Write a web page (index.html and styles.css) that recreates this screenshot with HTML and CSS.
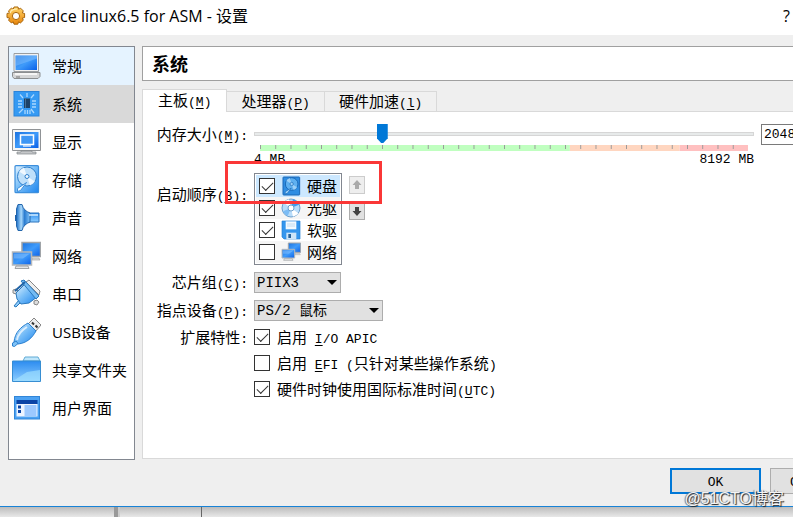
FILE: index.html
```html
<!DOCTYPE html>
<html lang="zh-CN">
<head>
<meta charset="utf-8">
<title>oralce linux6.5 for ASM - 设置</title>
<link rel="stylesheet" href="styles.css">
</head>
<body>
<svg class="defs" aria-hidden="true">
  <defs>
    <linearGradient id="blue" x1="0" y1="0" x2="1" y2="1"><stop offset="0" stop-color="#1c73e0"/><stop offset=".5" stop-color="#3f9bfa"/><stop offset="1" stop-color="#0a60e8"/></linearGradient>
    <linearGradient id="sky" x1="0" y1="0" x2="0" y2="1"><stop offset="0" stop-color="#2c8cf0"/><stop offset="1" stop-color="#8ccdff"/></linearGradient>
    <linearGradient id="pale" x1="0" y1="0" x2="1" y2="1"><stop offset="0" stop-color="#e4f4ff"/><stop offset=".45" stop-color="#7cc0f8"/><stop offset="1" stop-color="#1d85ee"/></linearGradient>
    <linearGradient id="cone" x1="0" y1="0" x2="1" y2="0"><stop offset="0" stop-color="#1c6fc8"/><stop offset=".35" stop-color="#a7d8fb"/><stop offset=".6" stop-color="#2a7cd0"/><stop offset="1" stop-color="#7fc2f8"/></linearGradient>
    <linearGradient id="gold" x1="0" y1="0" x2="0" y2="1"><stop offset="0" stop-color="#ffd468"/><stop offset="1" stop-color="#e8860c"/></linearGradient>
    <symbol id="i-net" viewBox="0 0 30 30">
      <path d="M11 1.500h18.500v14H11z" fill="url(#blue)" stroke="#a0a4a8" stroke-width="1.500"/>
      <path d="M21 17h7l1 2h-8z" fill="#d8dadc" stroke="#999" stroke-width=".6"/>
      <path d="M1.500 11h19v13h-19z" fill="url(#blue)" stroke="#b4b8bc" stroke-width="1.500"/>
      <path d="M3 12.500h16l-7 5H3z" fill="#8cc5ff" opacity=".5"/>
      <path d="M5 25h12l1 2.500H4z" fill="#e3e5e7" stroke="#8d9195" stroke-width=".8"/>
    </symbol>
    <symbol id="i-disk" viewBox="0 0 30 30">
      <rect x="4" y=".7" width="23.500" height="27" rx="1" fill="url(#pale)" stroke="#3d8fdc" stroke-width="1.200"/>
      <circle cx="16" cy="11.500" r="9.500" fill="#bfe0fa" stroke="#2f7fcc"/>
      <path d="M16 11.500 8 6.500a9.500 9.500 0 0 1 5-4zM16 11.500l8 5a9.500 9.500 0 0 1-5 4z" fill="#fff" opacity=".75"/>
      <circle cx="16" cy="11.500" r="2" fill="#eef8ff" stroke="#2f7fcc"/>
      <path d="M15.500 17.500 9.500 25.500 6.500 26.500 6.500 23.500z" fill="#f4fbff" stroke="#3d8fdc"/>
    </symbol>
    <symbol id="i-disk-selected" viewBox="0 0 30 30">
      <rect x="3" y="1.500" width="25" height="27" rx="1" fill="#2f8de2" stroke="#1a69b8" stroke-width="1.500"/>
      <circle cx="16" cy="12" r="9.500" fill="#5fb0f0" stroke="#1a69b8" stroke-width="1.500"/>
      <path d="M16 12 8 7a9.500 9.500 0 0 1 5-4zM16 12l8 5a9.500 9.500 0 0 1-5 4z" fill="#9dd0f7"/>
      <circle cx="16" cy="12" r="2.500" fill="#9dd0f7" stroke="#1a69b8"/>
      <path d="M15.500 18 9.500 26 6 27 6.500 23.500z" fill="#a9d8fa" stroke="#1a69b8"/>
    </symbol>
  </defs>
</svg>

<div class="dialog">
  <header class="titlebar">
    <svg class="app-icon" viewBox="0 0 20 20" aria-hidden="true">
      <path d="M8 1h4l.6 2.200 2-1 2.700 2.700-1 2 2.300.6v4l-2.300.7 1 2-2.800 2.700-2-1-.7 2.300H8l-.7-2.300-2 1-2.700-2.700 1-2L1 11.500v-4l2.500-.6-1-2L5.300 2.200l2 1z" fill="url(#gold)" stroke="#a9660d"/>
      <path d="M4 7c1-3 4-4 7-4" fill="none" stroke="#fff0b8" stroke-width="1.200"/>
      <circle cx="10" cy="10" r="3.600" fill="#fff" stroke="#a9660d"/>
    </svg>
    <span class="title">oralce linux6.5 for ASM - 设置</span>
    <button class="help" aria-label="帮助">?</button>
  </header>

  <div class="body">
    <nav class="sidebar">
      <a href="#general" class="hover"><svg viewBox="0 0 30 30"><path d="M3 2.500h24.500v18H3z" fill="#f2f2f2" stroke="#9a9da0"/><path d="M4.500 4.500h21.500v14.500H4.500z" fill="url(#blue)"/><path d="M4.500 4.500h21.500v3L4.500 15z" fill="#8cc5ff" opacity=".45"/><path d="M1.500 21.500h27.500v4l-2 2H3l-1.500-2z" fill="#d5d6d7" stroke="#8b8e90"/><path d="M4 23h22" stroke="#fff" stroke-width="1.500"/><path d="M5 26h4" stroke="#777"/></svg>常规</a>
      <a href="#system" class="current"><svg viewBox="0 0 30 30"><rect x="3" y="2.500" width="25" height="24.500" fill="#359af3" stroke="#2a83da"/><path d="M13 9.500h6V19h-6z" fill="#1c4266"/><path d="M14.500 9v10" stroke="#456f93"/><path d="M16 4v4M9 5.500l3 3.500M23 5.500 20 9M7 12h4M7 15h4M7 18h4M21 12h4M21 15h4M21 18h4M12 20l-4 4M20 20l3 4M14 21v4M16.500 21v4M19 21v4" stroke="#a9d7ff" stroke-width="1.300"/></svg>系统</a>
      <a href="#display"><svg viewBox="0 0 30 30"><path d="M1.500 2.500h28v21h-28z" fill="#f5f5f5" stroke="#909396"/><path d="M4 5h23.500v16H4z" fill="url(#blue)"/><path d="M9.500 8h13v9.500h-13z" fill="#3e96f4" stroke="#fff" stroke-width="1.500"/><path d="M12 19h8" stroke="#fff" stroke-width="1.200"/><path d="M10 24h11v1h4v2H6v-2h4z" fill="#c5c7c9" stroke="#83878a" stroke-width=".7"/></svg>显示</a>
      <a href="#storage"><svg><use href="#i-disk"/></svg>存储</a>
      <a href="#audio"><svg viewBox="0 0 30 30"><path d="M4 12h3v6H4z" fill="#1f62ad"/><path d="M17 10h11v9H17z" fill="url(#sky)" stroke="#2a73bd"/><path d="M7 1.500h4c1 4.500 4 7 8 8.500v9c-4 1.500-7 4-8 8.500H7L5.500 23V6z" fill="url(#cone)" stroke="#2366ac"/><path d="M18 12h9" stroke="#d3ecff" stroke-width="1.500"/></svg>声音</a>
      <a href="#network"><svg><use href="#i-net"/></svg>网络</a>
      <a href="#serial"><svg viewBox="0 0 30 30"><path d="M15 3l3-2 11 11-1 4z" fill="#eee" stroke="#888"/><path d="M2 11l3-1 2 2-2 3-3-1zM23 22l3-1 2 2-2 3-3-1z" fill="#ddd" stroke="#888"/><path d="M3 27l5-6 2 2-5 5z" fill="#8bcafa" stroke="#2977bb"/><path d="M5 14 14 5l12 13-8 6-8 1-4-5z" fill="url(#pale)" stroke="#2a78bd"/><path d="M10 2l3-1 15 16-3 3z" fill="#74bbf3" stroke="#2a78bd"/><path d="M4 12 14 3" stroke="#1f62a5" stroke-width="2"/></svg>串口</a>
      <a href="#usb"><svg viewBox="0 0 30 30"><path d="M17 7l6-6 7 7-6 7z" fill="#eee" stroke="#858585"/><path d="M21 5.500l2 2M24.500 8.500l2 2" stroke="#333" stroke-width="2"/><path d="M3 25C4 15 10 10 17 6l8 8c-4 7-9 12-18 13z" fill="url(#pale)" stroke="#2a80cf"/><path d="M6 23c1-6 5-10 10-13" fill="none" stroke="#fff" stroke-width="2" opacity=".7"/><path d="M1.500 26 5 24l2 2.500-3.500 3-2-.5z" fill="#7fc2f6" stroke="#2a80cf"/></svg>USB设备</a>
      <a href="#shared"><svg viewBox="0 0 30 30"><path d="M12 6l2-4h13l2 4z" fill="#bfe6fb" stroke="#62abd5"/><path d="M1.500 6h28v20.500h-28z" fill="url(#sky)" stroke="#378ed2"/><path d="M2 26 16 17l13-2v11z" fill="#a5e5ff" opacity=".6"/></svg>共享文件夹</a>
      <a href="#ui"><svg viewBox="0 0 30 30"><rect x="3.500" y="3.500" width="25" height="22.500" fill="#4ca2f3" stroke="#3186d8"/><path d="M5.500 7h21v4h-21z" fill="#0b44a6"/><path d="M5.500 11h21v12.500h-21z" fill="#eef5ff"/><path d="M13.500 12h12v11h-12z" fill="#9dc9ff"/><path d="M7 12.500h3v3H7zM7 17h3v3H7z" fill="#0b44a6"/></svg>用户界面</a>
    </nav>

    <main class="main">
      <h1>系统</h1>
      <div class="tabs" role="tablist">
        <button role="tab" aria-selected="true" class="active">主板<span class="mono">(<u>M</u>)</span></button>
        <button role="tab" aria-selected="false">处理器<span class="mono">(<u>P</u>)</span></button>
        <button role="tab" aria-selected="false">硬件加速<span class="mono">(<u>l</u>)</span></button>
      </div>
      <form class="panel">
        <label for="memory">内存大小<span class="mono">(<u>M</u>):</span></label>
        <div class="memory">
          <div class="slider">
            <input type="range" id="memory" min="0" max="8192" value="2048">
            <svg class="scale" aria-hidden="true">
              <defs><pattern id="ticks" width="3.125%" height="6" patternUnits="userSpaceOnUse"><path d="M.5 0v4" stroke="#999" shape-rendering="crispEdges"/></pattern></defs>
              <rect width="63.500%" height="6" fill="#c0ffc0"/>
              <rect x="63.500%" width="22.500%" height="6" fill="#ffd6c0"/>
              <rect x="86%" width="14%" height="6" fill="#ffc0c0"/>
              <rect width="100%" height="6" fill="url(#ticks)"/>
            </svg>
            <div class="range-labels mono"><span>4 MB</span><span>8192 MB</span></div>
          </div>
          <input type="text" class="amount mono" aria-label="内存 MB" value="2048 MB">
        </div>

        <span class="boot-label">启动顺序<span class="mono">(<u>B</u>):</span></span>
        <div class="boot">
          <ul>
            <li class="selected"><label><input type="checkbox" checked><svg><use href="#i-disk-selected"/></svg>硬盘</label></li>
            <li class="alt"><label><input type="checkbox" checked><svg viewBox="0 0 30 30"><circle cx="15" cy="15" r="13.500" fill="#b8dcfa" stroke="#6c9fcc" stroke-width="1.500"/><path d="M15 15 4 7a13 13 0 0 1 8-5zM15 15l11 8a13 13 0 0 1-8 5z" fill="#fff"/><path d="M15 15 18 2a13 13 0 0 1 9 8z" fill="#3d9cf2"/><path d="M15 15 3 20a13 13 0 0 0 7 7z" fill="#7bbcf5"/><circle cx="15" cy="15" r="4.500" fill="#fff" stroke="#6c9fcc" stroke-width="1.500"/></svg>光驱</label></li>
            <li><label><input type="checkbox" checked><svg viewBox="0 0 30 30"><path d="M1.500 1.500h27v27h-24l-3-3z" fill="#3496ee" stroke="#2380d3"/><path d="M7 2h16v12H7z" fill="#f3faff"/><path d="M8 19h15v10H8z" fill="#cde5f8"/><path d="M11 21h4v6h-4z" fill="#27639b"/><path d="M9 6h12M9 9h12" stroke="#a9cde9"/></svg>软驱</label></li>
            <li class="alt"><label><input type="checkbox"><svg><use href="#i-net"/></svg>网络</label></li>
          </ul>
          <div class="movers">
            <button type="button" disabled aria-label="上移"><svg viewBox="0 0 10 10"><path d="M5 0l4.500 5H7v4H3V5H.5z" fill="#aaa"/></svg></button>
            <button type="button" aria-label="下移"><svg viewBox="0 0 10 10"><path d="M5 10 .5 5H3V1h4v4h2.500z" fill="#444"/></svg></button>
          </div>
          <div class="highlight"></div>
        </div>

        <label for="chipset">芯片组<span class="mono">(<u>C</u>):</span></label>
        <div class="drop"><select id="chipset" class="chipset"><option>PIIX3</option><option>ICH9</option></select></div>

        <label for="pointing">指点设备<span class="mono">(<u>P</u>):</span></label>
        <div class="drop"><select id="pointing" class="pointing"><option>PS/2 鼠标</option><option>USB 鼠标</option></select></div>

        <span class="features-label">扩展特性<span class="mono">:</span></span>
        <div class="features">
          <label><input type="checkbox" checked><span>启用<span class="mono"> <u>I</u>/O APIC</span></span></label>
          <label><input type="checkbox"><span>启用<span class="mono"> <u>E</u>FI (</span>只针对某些操作系统<span class="mono">)</span></span></label>
          <label><input type="checkbox" checked><span>硬件时钟使用国际标准时间<span class="mono">(<u>U</u>TC)</span></span></label>
        </div>
      </form>
    </main>
  </div>

  <footer class="actions">
    <button class="ok mono">OK</button>
    <button class="cancel mono">Cancel</button>
  </footer>
</div>
<div class="desktop"><i class="split"></i><i class="line"></i></div>
<div class="watermark">@51CTO博客</div>
</body>
</html>
```

FILE: styles.css
```css
* { box-sizing: border-box; }

body {
  margin: 0;
  min-height: 100vh;
  display: flex;
  flex-direction: column;
  position: relative;
  overflow: hidden;
  background: #e6e6e6;
  color: #000;
  font: 15px/20px "Noto Sans CJK SC", sans-serif;
}

button, input, select { font: inherit; color: inherit; margin: 0; border-radius: 0; }
.defs { position: absolute; width: 0; height: 0; }
.mono { font-family: "Liberation Mono", monospace; font-size: 13px; line-height: 1; white-space: pre; }
u { text-underline-offset: 2px; }

.dialog {
  flex: 1;
  display: flex;
  flex-direction: column;
  background: #efefef;
  border-bottom: 1px solid #1883d7;
}

.titlebar {
  display: flex;
  align-items: center;
  gap: 5px;
  height: 35px;
  padding: 0 3px 3px 6px;
  background: #fff;
  font-family: "Open Sans", "Noto Sans CJK SC", sans-serif;
  font-size: 16px;
}
.app-icon { width: 20px; height: 20px; }
.title { flex: 1; }
.help { border: 0; padding: 0; background: none; }

.body {
  flex: 1;
  display: flex;
  gap: 7px;
  padding: 11px 0 0 8px;
}

.sidebar {
  flex: 0 0 127px;
  background: #fff;
  border: 1px solid #828790;
}
.sidebar a {
  display: flex;
  align-items: center;
  gap: 11px;
  height: 38px;
  padding-left: 2px;
  color: inherit;
  font-family: "Open Sans", "Noto Sans CJK SC", sans-serif;
  text-decoration: none;
  white-space: nowrap;
}
.sidebar svg { flex: none; width: 30px; height: 30px; }
.sidebar .hover { background: #e5f3ff; }
.sidebar .current { background: #d9d9d9; }

.main {
  flex: 1;
  min-width: 0;
  display: flex;
  flex-direction: column;
}
h1 {
  margin: 0 0 8px;
  padding: 0 9px;
  background: #fff;
  border: 1px solid #a0a0a0;
  border-right: 0;
  font-size: 18px;
  line-height: 33px;
}

.tabs { display: flex; align-items: flex-end; }
.tabs button {
  height: 20px;
  padding: 0 14px 1px;
  background: #f0f0f0;
  border: 1px solid #d9d9d9;
  border-width: 1px 1px 0 0;
  line-height: 18px;
  white-space: nowrap;
}
.tabs .active {
  height: 23px;
  margin-bottom: -1px;
  padding: 0 15px 2px;
  position: relative;
  background: #fff;
  border-left-width: 1px;
}

.panel {
  flex: 1;
  display: grid;
  grid-template-columns: 105px minmax(0, 1fr);
  align-content: start;
  gap: 7px 6px;
  padding-top: 12px;
  margin-bottom: 1px;
  background: #fff;
  border: 1px solid #d9d9d9;
  border-right: 0;
}
.panel > label, .boot-label, .features-label {
  height: 21px;
  text-align: right;
  line-height: 20px;
  white-space: nowrap;
}
.boot-label { margin-top: 11px; }
.features-label { height: 18px; line-height: 18px; }

.memory { display: flex; align-items: flex-start; gap: 7px; height: 42px; }
.slider { flex: 1; min-width: 0; }
.slider input {
  appearance: none;
  display: block;
  width: 100%;
  height: 20px;
  background: none;
}
.slider input::-webkit-slider-runnable-track {
  height: 4px;
  background: #e7eaea;
  border: 1px solid #d6d6d6;
}
.slider input::-webkit-slider-thumb {
  appearance: none;
  width: 11px;
  height: 19px;
  margin-top: -9px;
  background: #0078d7;
  clip-path: polygon(0 0, 100% 0, 100% 75%, 60% 100%, 40% 100%, 0 75%);
}
.scale { display: block; width: calc(100% - 12px); height: 6px; margin: 1px 6px 0; }
.range-labels { display: flex; justify-content: space-between; line-height: 18px; }
.amount {
  flex: none;
  width: 32px;
  height: 21px;
  padding: 0 0 0 2px;
  background: #fff;
  border: 1px solid #7a7a7a;
  border-right: 0;
}

.boot { display: flex; align-items: flex-start; gap: 7px; position: relative; }
.boot ul {
  width: 88px;
  margin: 0;
  padding: 1px;
  list-style: none;
  border: 1px solid #828790;
}
.boot li { height: 22px; }
.boot li label { display: flex; align-items: center; height: 22px; padding-left: 3px; }
.boot li svg { width: 20px; height: 20px; margin: 0 6px; }
.boot .selected { background: #cce8ff; }
.boot .alt { background: #f5f5f5; }

input[type="checkbox"] {
  appearance: none;
  flex: none;
  width: 16px;
  height: 16px;
  background: #fff;
  border: 1px solid #333;
}
input[type="checkbox"]:checked::before {
  content: "";
  display: block;
  width: 10px;
  height: 5px;
  margin: 3px 2px;
  border: solid #333;
  border-width: 0 0 1px 1px;
  transform: rotate(-45deg);
}

.movers { display: flex; flex-direction: column; gap: 8px; padding-top: 3px; }
.movers button {
  display: grid;
  place-items: center;
  width: 16px;
  height: 18px;
  padding: 0;
  background: #e1e1e1;
  border: 1px solid #adadad;
}
.movers button:disabled { background: #eee; border-color: #ccc; }
.movers svg { width: 10px; height: 10px; }

.highlight {
  position: absolute;
  left: -29px;
  top: -12px;
  width: 157px;
  height: 43px;
  border: 3px solid #fa3737;
  pointer-events: none;
}

select {
  appearance: none;
  display: block;
  height: 21px;
  padding: 0 2px;
  border: 1px solid #adadad;
  background: #e1e1e1;
  font-family: "Liberation Mono", "Noto Sans CJK SC", monospace;
  font-size: 14px;
}
.drop { display: flex; height: 21px; }
.drop::after {
  content: "";
  align-self: center;
  margin-left: -14px;
  border: 5px solid transparent;
  border-top-color: #000;
  border-bottom: 0;
  pointer-events: none;
}
.chipset { width: 87px; }
.pointing { width: 129px; }

.features { display: flex; flex-direction: column; gap: 8px; }
.features label { display: flex; align-items: center; gap: 7px; height: 18px; line-height: 18px; white-space: nowrap; }

.actions {
  display: flex;
  justify-content: flex-end;
  gap: 9px;
  padding: 8px 0 12px;
}
.actions button {
  height: 26px;
  padding: 2px 0 0;
  background: #e1e1e1;
  border: 1px solid #adadad;
}
.actions .ok { width: 91px; border: 2px solid #0078d7; }
.actions .cancel { width: 23px; padding-left: 19px; border-right: 0; overflow: hidden; text-align: left; }

.desktop {
  display: flex;
  height: 10px;
  background: linear-gradient(#bcbcbc, #e8e8e8);
}
.split { width: 6px; margin-left: 114px; background: #999; border-right: 2px solid #ccc; }
.line { width: 1px; margin-left: 81px; background: #666; }

.watermark {
  position: absolute;
  right: 9px;
  bottom: 8px;
  color: #f4f4f4;
  font: 16px/20px "Liberation Sans", "Noto Sans CJK SC", sans-serif;
  text-shadow: 1px 1px 1px #222, -1px 0 1px #666;
}
```
